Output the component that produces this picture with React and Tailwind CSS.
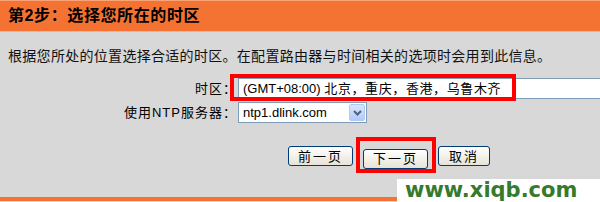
import React from "react";

const cjk = { fontFamily: '"Liberation Sans", "Noto Sans CJK SC", sans-serif' };

function XpButton({ children, className = "" }) {
  return (
    <button
      className={`h-[20px] rounded-[3px] border border-[#003c74] bg-gradient-to-b from-white to-[#e6e3d6] text-[13px] leading-none text-black tracking-[2px] ${className}`}
    >
      {children}
    </button>
  );
}

export default function App() {
  return (
    <div
      className="relative flex h-[202px] w-[600px] flex-col overflow-hidden bg-[#d8d8d8]"
      style={cjk}
    >
      <div className="flex h-[32px] items-center border-t border-b border-t-[#f8a478] border-b-[#e9b496] bg-[#f47232] pl-[8px]">
        <span className="text-[16px] font-bold tracking-[0.6px] text-black">第2步：选择您所在的时区</span>
      </div>

      <p className="mt-[14px] pl-[8px] text-[14px] leading-[20px] tracking-[0.3px] text-[#111]">
        根据您所处的位置选择合适的时区。在配置路由器与时间相关的选项时会用到此信息。
      </p>

      <div className="mt-[12px] grid grid-cols-[238px_1fr] items-center gap-y-[3px]">
        <div className="pr-[1px] text-right text-[13px] tracking-[1px] text-black">时区：</div>
        <div className="relative h-[21px]">
          <div className="flex h-[21px] w-[380px] items-center border border-[#7f9db9] bg-white pl-[4px] text-[13px] text-black">
            <span>(GMT+08:00)&nbsp;</span>
            <span className="tracking-[0.6px]">北京，重庆，香港，乌鲁木齐</span>
          </div>
          <div className="pointer-events-none absolute left-[-8px] top-[-4px] h-[27px] w-[286px] border-[4px] border-[#ff0000]" />
        </div>

        <div className="pr-[1px] text-right text-[13px] tracking-[1px] text-black">使用NTP服务器：</div>
        <div className="flex h-[21px] w-[129px] items-stretch border border-[#7f9db9] bg-white">
          <div className="flex flex-1 items-center pl-[4px] text-[13px] text-black">ntp1.dlink.com</div>
          <div className="m-[1px] flex w-[16px] items-center justify-center rounded-[2px] border border-[#b4c8f6] bg-gradient-to-b from-[#dbe6fd] to-[#b3c9f7]">
            <svg width="9" height="6" viewBox="0 0 9 6">
              <path d="M1 1 L4.5 4.5 L8 1" fill="none" stroke="#4d6185" strokeWidth="2" />
            </svg>
          </div>
        </div>
      </div>

      <div className="mt-[23px] flex pl-[288px] gap-x-[10px]">
        <XpButton className="w-[65px]">前一页</XpButton>
        <div className="relative">
          <XpButton className="w-[65px]">下一页</XpButton>
          <div className="pointer-events-none absolute left-[-7px] top-[-9px] h-[36px] w-[80px] border-[4px] border-[#ff0000]" />
        </div>
        <XpButton className="w-[52px]">取消</XpButton>
      </div>

      <div className="flex-1" />
      <div className="h-[4px] bg-[#f47232]" />
      <div className="h-[1px]" />

      <div className="absolute left-[397px] top-[179px] flex h-[23px] w-[203px] items-center bg-white pl-[8px]">
        <span
          className="text-[21px] font-bold leading-none text-[#367a2c]"
          style={{ fontFamily: '"DejaVu Sans", sans-serif' }}
        >
          www.xiqb.com
        </span>
      </div>
    </div>
  );
}
